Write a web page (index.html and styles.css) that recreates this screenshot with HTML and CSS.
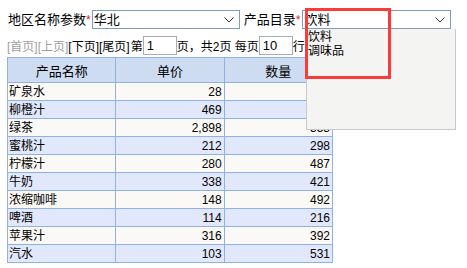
FILE: index.html
```html
<!DOCTYPE html>
<html>
<head>
<meta charset="utf-8">
<link rel="stylesheet" href="styles.css">
</head>
<body>
<div class="page">
  <div class="params">
    <span class="label">地区名称参数<span class="req">*</span></span>
    <div class="select sel-region">
      <span class="val">华北</span>
      <svg class="chev" width="10" height="6" viewBox="0 0 10 6"><polyline points="0.5,0.5 5,5 9.5,0.5" fill="none" stroke="#333" stroke-width="1"/></svg>
    </div>
    <span class="label label2">产品目录<span class="req">*</span></span>
    <div class="select sel-cat">
      <span class="val">饮料</span>
      <svg class="chev" width="10" height="6" viewBox="0 0 10 6"><polyline points="0.5,0.5 5,5 9.5,0.5" fill="none" stroke="#333" stroke-width="1"/></svg>
    </div>
  </div>
  <div class="pager">
    <span class="dis">[首页][上页]</span><span class="act">[下页][尾页]</span><span class="txt">第</span><span class="inp">1</span><span class="txt">页，共2页 每页</span><span class="inp">10</span><span class="txt">行</span>
  </div>
  <table class="grid">
    <thead>
      <tr><th>产品名称</th><th>单价</th><th>数量</th></tr>
    </thead>
    <tbody>
      <tr class="odd"><td>矿泉水</td><td class="num">28</td><td class="num">374</td></tr>
      <tr class="even"><td>柳橙汁</td><td class="num">469</td><td class="num">219</td></tr>
      <tr class="odd"><td>绿茶</td><td class="num">2,898</td><td class="num">353</td></tr>
      <tr class="even"><td>蜜桃汁</td><td class="num">212</td><td class="num">298</td></tr>
      <tr class="odd"><td>柠檬汁</td><td class="num">280</td><td class="num">487</td></tr>
      <tr class="even"><td>牛奶</td><td class="num">338</td><td class="num">421</td></tr>
      <tr class="odd"><td>浓缩咖啡</td><td class="num">148</td><td class="num">492</td></tr>
      <tr class="even"><td>啤酒</td><td class="num">114</td><td class="num">216</td></tr>
      <tr class="odd"><td>苹果汁</td><td class="num">316</td><td class="num">392</td></tr>
      <tr class="even"><td>汽水</td><td class="num">103</td><td class="num">531</td></tr>
    </tbody>
  </table>
  <div class="dropdown">
    <div class="opt">饮料</div>
    <div class="opt">调味品</div>
  </div>
  <div class="highlight"></div>
</div>
</body>
</html>
```

FILE: styles.css
```css
html, body {
  margin: 0;
  padding: 0;
  background: #ffffff;
}
body {
  font-family: "Liberation Sans", "Noto Sans CJK SC", sans-serif;
  color: #000;
}
.page {
  position: relative;
  width: 467px;
  height: 268px;
  overflow: hidden;
}
.params {
  display: flex;
  align-items: center;
  height: 19px;
  margin-top: 10px;
  padding-left: 8px;
  font-size: 13px;
}
.label {
  line-height: 19px;
  white-space: nowrap;
}
.req {
  color: #e02020;
  font-size: 12px;
}
.label2 {
  margin-left: 4px;
}
.select {
  position: relative;
  box-sizing: border-box;
  height: 19px;
  border: 1px solid #7f9db9;
  background: #fff;
  display: flex;
  align-items: center;
  padding-left: 1px;
  font-size: 13px;
}
.sel-region {
  width: 148px;
  margin-left: 1px;
}
.sel-cat {
  width: 149px;
  margin-left: 2px;
}
.val {
  line-height: 17px;
  flex: 1;
}
.chev {
  margin-right: 5px;
  margin-top: 1px;
}
.pager {
  display: flex;
  align-items: center;
  height: 19px;
  margin-top: 7px;
  padding-left: 7px;
  font-size: 12px;
  white-space: pre;
}
.dis {
  color: #a0a0a0;
}
.act {
  color: #000;
  margin-right: 1px;
}
.inp {
  box-sizing: border-box;
  width: 34px;
  height: 19px;
  border: 1px solid #a5acb2;
  padding-left: 3px;
  line-height: 17px;
  font-size: 13px;
  color: #000;
}
.grid {
  border-collapse: collapse;
  margin-left: 7px;
  margin-top: 2px;
  font-size: 12px;
  table-layout: fixed;
  width: 326px;
}
.grid th, .grid td {
  border: 1px solid #8db2e3;
  padding: 0 1px;
  white-space: nowrap;
}
.grid th {
  background: #cddcf0;
  font-weight: normal;
  height: 24px;
  font-size: 13px;
  text-align: center;
}
.grid td {
  height: 17px;
  line-height: 16px;
}
.grid td.num {
  text-align: right;
  padding-right: 2px;
}
.odd td {
  background: #fbf9f6;
}
.even td {
  background: #e2e8fb;
}
.dropdown {
  position: absolute;
  left: 306px;
  top: 29px;
  box-sizing: border-box;
  width: 150px;
  height: 101px;
  background: #f4f4f2;
  border: 1px solid #c8c8c8;
  border-top: none;
  padding-left: 1px;
  padding-top: 1px;
  font-size: 12px;
}
.opt {
  line-height: 14px;
}
.highlight {
  position: absolute;
  left: 305px;
  top: 8px;
  box-sizing: border-box;
  width: 86px;
  height: 71px;
  border: 3px solid #fb3a3a;
}
```
